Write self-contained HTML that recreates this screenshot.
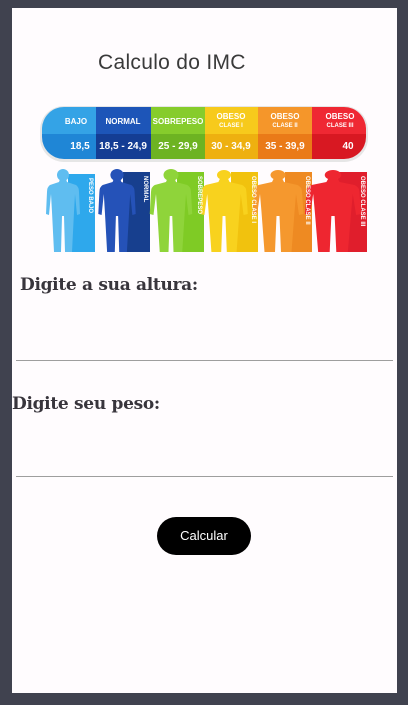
<!DOCTYPE html>
<html><head><meta charset="utf-8"><style>
html,body{margin:0;padding:0;}
body{width:408px;height:705px;background:#40424f;position:relative;overflow:hidden;font-family:"Liberation Sans",sans-serif;}
.screen{position:absolute;left:12px;top:8px;width:385px;height:685px;background:#fffcfe;overflow:hidden;}
.title{position:absolute;left:86px;top:43px;font-size:21px;color:#3a3a3a;letter-spacing:0.3px;}
.h{position:absolute;font-family:"DejaVu Serif",serif;font-weight:bold;font-size:17px;color:#38353c;letter-spacing:-0.3px;}
.line{position:absolute;left:4px;width:377px;height:1px;background:#9e9e9e;}
.btn{position:absolute;left:145px;top:509px;width:94px;height:38px;background:#000;border-radius:19px;color:#fff;font-size:13px;text-align:center;line-height:38px;}
</style></head><body>
<div class="screen">
<div class="title">Calculo do IMC</div>
<svg style="position:absolute;left:28px;top:96px" width="330" height="152" viewBox="0 0 330 152">
<defs><clipPath id="pill"><rect x="2" y="3" width="324" height="52" rx="22"/></clipPath></defs>
<rect x="0" y="2" width="328" height="56" rx="24" fill="#e6e6e6"/>
<g clip-path="url(#pill)">
<rect x="0" y="0" width="56" height="30" fill="#34a3e6"/><rect x="0" y="30" width="56" height="30" fill="#1f86d6"/>
<rect x="56" y="0" width="55" height="30" fill="#1d55b8"/><rect x="56" y="30" width="55" height="30" fill="#143d94"/>
<rect x="111" y="0" width="54" height="30" fill="#86cc2c"/><rect x="111" y="30" width="54" height="30" fill="#6db322"/>
<rect x="165" y="0" width="53" height="30" fill="#f7ca1c"/><rect x="165" y="30" width="53" height="30" fill="#eeb010"/>
<rect x="218" y="0" width="54" height="30" fill="#f5962a"/><rect x="218" y="30" width="54" height="30" fill="#ea7a18"/>
<rect x="272" y="0" width="56" height="30" fill="#ef2833"/><rect x="272" y="30" width="56" height="30" fill="#d81822"/>
</g>
<g font-family="Liberation Sans" font-size="8" fill="#fff" text-anchor="middle" font-weight="bold">
<text x="36" y="20">BAJO</text><text x="83" y="20">NORMAL</text><text x="138" y="20">SOBREPESO</text>
<text x="191" y="15">OBESO</text><text x="191" y="23" font-size="6">CLASE I</text>
<text x="245" y="15">OBESO</text><text x="245" y="23" font-size="6">CLASE II</text>
<text x="300" y="15">OBESO</text><text x="300" y="23" font-size="6">CLASE III</text>
<g font-size="10"><text x="40" y="45">18,5</text><text x="83" y="45">18,5 - 24,9</text><text x="138" y="45">25 - 29,9</text><text x="191" y="45">30 - 34,9</text><text x="245" y="45">35 - 39,9</text><text x="308" y="45">40</text></g>
</g>
<g>
<rect x="28" y="70" width="27" height="78" fill="#2ea8ec"/>
<rect x="83" y="68" width="27" height="80" fill="#173f8e"/>
<rect x="137" y="68" width="27" height="80" fill="#7fcb25"/>
<rect x="191" y="68" width="27" height="80" fill="#f1c20e"/>
<rect x="245" y="68" width="27" height="80" fill="#ee8a22"/>
<rect x="298" y="68" width="29" height="80" fill="#e01e2c"/>
</g>
<g transform="translate(23,64)" fill="#5fbdf0"><circle cx="0" cy="7" r="6"/><path d="M-3,11 L3,11 L4,14 L13,17 Q16,19 16,24 L17,46 L14,47 L12,26 L11,44 L9,84 L2,84 L1,48 L-1,48 L-2,84 L-9,84 L-11,44 L-12,26 L-14,47 L-17,46 L-16,24 Q-16,19 -13,17 L-4,14 Z"/></g>
<g transform="translate(77,64) scale(1.1,1)" fill="#2552b8"><circle cx="0" cy="7" r="6"/><path d="M-3,11 L3,11 L4,14 L13,17 Q16,19 16,24 L17,46 L14,47 L12,26 L11,44 L9,84 L2,84 L1,48 L-1,48 L-2,84 L-9,84 L-11,44 L-12,26 L-14,47 L-17,46 L-16,24 Q-16,19 -13,17 L-4,14 Z"/></g>
<g transform="translate(131,64) scale(1.25,1)" fill="#8fd43a"><circle cx="0" cy="7" r="6"/><path d="M-3,11 L3,11 L4,14 L13,17 Q16,19 16,24 L17,46 L14,47 L12,26 L11,44 L9,84 L2,84 L1,48 L-1,48 L-2,84 L-9,84 L-11,44 L-12,26 L-14,47 L-17,46 L-16,24 Q-16,19 -13,17 L-4,14 Z"/></g>
<g transform="translate(184,64) scale(1.4,1)" fill="#f8d21e"><circle cx="0" cy="7" r="5"/><path d="M-3,11 L3,11 L4,14 L13,17 Q16,19 16,24 L17,46 L14,47 L12,26 L11,44 L9,84 L2,84 L1,48 L-1,48 L-2,84 L-9,84 L-11,44 L-12,26 L-14,47 L-17,46 L-16,24 Q-16,19 -13,17 L-4,14 Z"/></g>
<g transform="translate(238,64) scale(1.5,1)" fill="#f5982e"><circle cx="0" cy="7" r="5"/><path d="M-3,11 L3,11 L4,14 L13,17 Q16,19 16,24 L17,46 L14,47 L12,26 L11,44 L9,84 L2,84 L1,48 L-1,48 L-2,84 L-9,84 L-11,44 L-12,26 L-14,47 L-17,46 L-16,24 Q-16,19 -13,17 L-4,14 Z"/></g>
<g transform="translate(293,64) scale(1.65,1)" fill="#ee2630"><circle cx="0" cy="7" r="5"/><path d="M-3,11 L3,11 L4,14 L13,17 Q16,19 16,24 L17,46 L14,47 L12,26 L11,44 L9,84 L2,84 L1,48 L-1,48 L-2,84 L-9,84 L-11,44 L-12,26 L-14,47 L-17,46 L-16,24 Q-16,19 -13,17 L-4,14 Z"/></g>
<g font-family="Liberation Sans" font-size="6" font-weight="bold" fill="#fff">
<text transform="translate(49,74) rotate(90)">PESO BAJO</text>
<text transform="translate(104,72) rotate(90)">NORMAL</text>
<text transform="translate(158,72) rotate(90)">SOBREPESO</text>
<text transform="translate(212,72) rotate(90)">OBESO CLASE I</text>
<text transform="translate(266,72) rotate(90)">OBESO CLASE II</text>
<text transform="translate(321,72) rotate(90)">OBESO CLASE III</text>
</g>
</svg>
<div class="h" style="left:8px;top:267px">Digite a sua altura:</div>
<div class="line" style="top:352px"></div>
<div class="h" style="left:0px;top:386px">Digite seu peso:</div>
<div class="line" style="top:468px"></div>
<div class="btn">Calcular</div>
</div>
</body></html>
